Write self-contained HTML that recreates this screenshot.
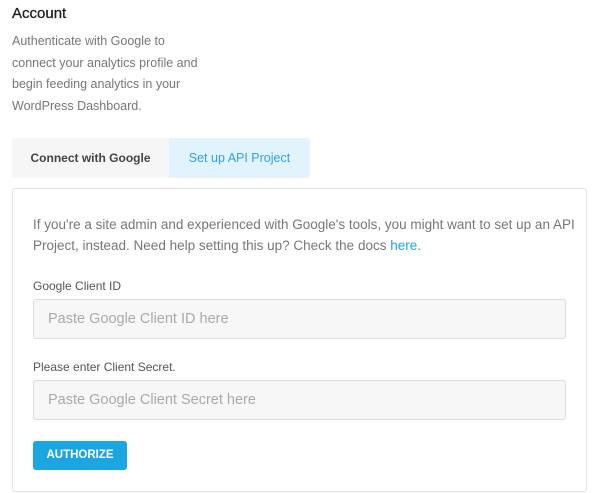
<!DOCTYPE html>
<html><head><style>
body{margin:0;width:600px;height:493px;background:#fff;font-family:"Liberation Sans",sans-serif;position:relative;overflow:hidden}
.a{position:absolute}
h1{position:absolute;left:12px;top:5px;margin:0;font-size:15px;font-weight:normal;color:#222;-webkit-text-stroke:.3px #222}
.desc{left:12px;top:31px;font-size:12.5px;line-height:21.7px;color:#777;width:200px}
.tab1{left:12px;top:138px;width:157px;height:40px;background:#f6f6f6;border-radius:3px 0 0 3px;font-size:12px;font-weight:bold;color:#444;text-align:center;line-height:40px}
.tab2{left:169px;top:138px;width:141px;height:40px;background:#e1f4fd;border-radius:0 3px 3px 0;font-size:12.5px;color:#2ea2e3;text-align:center;line-height:40px}
.panel{left:12px;top:188px;width:573px;height:302px;border:1px solid #e2e2e2;border-radius:3px}
.p{left:33px;top:214px;width:550px;font-size:13.5px;line-height:21px;color:#777}
.p b{color:#1ba6e2;font-weight:normal}
.lbl{left:33px;font-size:12px;color:#555}
.in{left:33px;width:531px;height:38px;border:1px solid #ddd;border-radius:3px;background:#f7f7f7;font-size:14.5px;color:#aaa;line-height:38px;text-indent:14px}
.btn{left:33px;top:441px;width:94px;height:29px;background:#1ba6e2;border-radius:3px;color:#fff;font-size:11.5px;font-weight:bold;text-align:center;line-height:29px}
</style></head><body>
<h1>Account</h1>
<div class="a desc">Authenticate with Google to connect your analytics profile and begin feeding analytics in your WordPress Dashboard.</div>
<div class="a tab1">Connect with Google</div>
<div class="a tab2">Set up API Project</div>
<div class="a panel"></div>
<div class="a p">If you're a site admin and experienced with Google's tools, you might want to set up an API Project, instead. Need help setting this up? Check the docs <b>here</b>.</div>
<div class="a lbl" style="top:279px">Google Client ID</div>
<div class="a in" style="top:299px">Paste Google Client ID here</div>
<div class="a lbl" style="top:360px">Please enter Client Secret.</div>
<div class="a in" style="top:380px">Paste Google Client Secret here</div>
<div class="a btn">AUTHORIZE</div>
</body></html>
